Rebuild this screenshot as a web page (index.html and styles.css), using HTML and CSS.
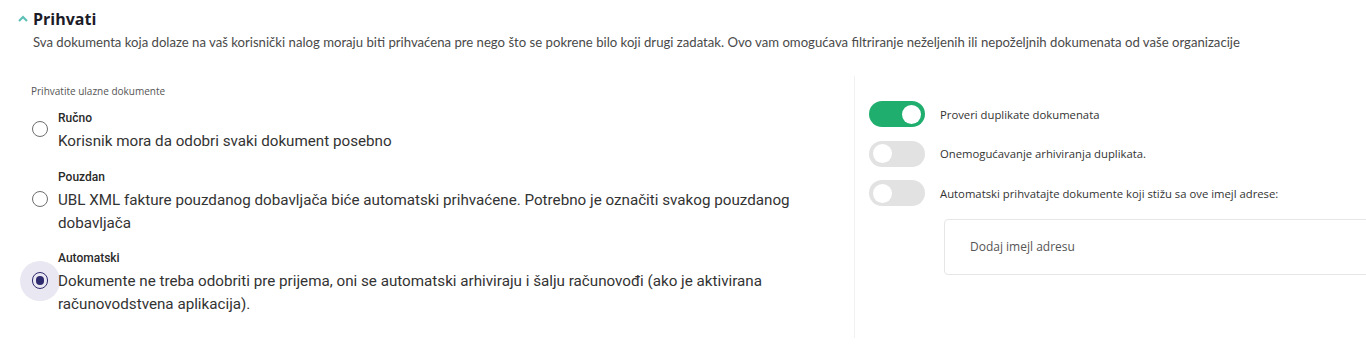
FILE: index.html
```html
<!DOCTYPE html>
<html lang="sr">
<head>
<meta charset="utf-8">
<link rel="stylesheet" href="styles.css">
</head>
<body>
<section class="panel">
  <header class="head">
    <svg class="chev" width="10" height="7" viewBox="0 0 10 7"><path d="M1 6 L5 2 L9 6" fill="none" stroke="#5fc0b6" stroke-width="2.2"/></svg>
    <h2 class="title">Prihvati</h2>
  </header>
  <p class="desc">Sva dokumenta koja dolaze na vaš korisnički nalog moraju biti prihvaćena pre nego što se pokrene bilo koji drugi zadatak. Ovo vam omogućava filtriranje neželjenih ili nepoželjnih dokumenata od vaše organizacije</p>
  <div class="cols">
    <div class="left">
      <div class="caption">Prihvatite ulazne dokumente</div>
      <div class="opt">
        <span class="radio"><span class="ring"></span></span>
        <div class="otext">
          <div class="olabel">Ručno</div>
          <div class="odesc">Korisnik mora da odobri svaki dokument posebno</div>
        </div>
      </div>
      <div class="opt">
        <span class="radio"><span class="ring"></span></span>
        <div class="otext">
          <div class="olabel">Pouzdan</div>
          <div class="odesc">UBL XML fakture pouzdanog dobavljača biće automatski prihvaćene. Potrebno je označiti svakog pouzdanog dobavljača</div>
        </div>
      </div>
      <div class="opt">
        <span class="radio checked"><span class="ring"><span class="dot"></span></span></span>
        <div class="otext">
          <div class="olabel">Automatski</div>
          <div class="odesc">Dokumente ne treba odobriti pre prijema, oni se automatski arhiviraju i šalju računovođi (ako je aktivirana računovodstvena aplikacija).</div>
        </div>
      </div>
    </div>
    <div class="right">
      <div class="trow"><span class="toggle on"><span class="knob"></span></span><span class="tlabel">Proveri duplikate dokumenata</span></div>
      <div class="trow"><span class="toggle"><span class="knob"></span></span><span class="tlabel">Onemogućavanje arhiviranja duplikata.</span></div>
      <div class="trow"><span class="toggle"><span class="knob"></span></span><span class="tlabel">Automatski prihvatajte dokumente koji stižu sa ove imejl adrese:</span></div>
      <div class="email">Dodaj imejl adresu</div>
    </div>
  </div>
</section>
</body>
</html>
```

FILE: styles.css
```css
html, body { margin: 0; padding: 0; background: #fff; }
body { width: 1366px; height: 348px; overflow: hidden; }
.panel { padding: 9px 0 0 18px; }
.head { display: flex; align-items: center; gap: 5px; height: 20px; }
.chev { margin-top: -2px; }
.title { margin: 0; font-family: "Open Sans", sans-serif; font-weight: 700; font-size: 16px; color: #1c1c28; line-height: 20px; }
.desc { margin: 3px 0 0 15px; font-family: Lato, sans-serif; font-size: 13.15px; color: #4a4a4a; line-height: 20px; white-space: nowrap; }
.cols { display: flex; margin-top: 24px; }
.left { flex: none; width: 823px; padding: 8px 0 0 13px; border-right: 1px solid #f0f0f0; height: 254px; }
.caption { font-family: "Open Sans", sans-serif; font-size: 10px; color: #555; line-height: 14px; margin-bottom: 10px; }
.opt { display: flex; align-items: center; margin-bottom: 13.5px; }
.radio { width: 40px; height: 40px; flex: none; margin-left: -11px; margin-top: -3px; display: flex; align-items: center; justify-content: center; border-radius: 50%; }
.radio.checked { background: #e9e7f1; }
.ring { width: 14.5px; height: 14.5px; border: 1.7px solid #6e6e6e; border-radius: 50%; display: flex; align-items: center; justify-content: center; }
.radio.checked .ring { border-color: #2e2a6e; }
.dot { width: 8.5px; height: 8.5px; border-radius: 50%; background: #2e2a6e; }
.otext { margin-left: -2px; }
.olabel { font-family: Roboto, sans-serif; font-weight: 500; font-size: 12px; color: #2a2a2a; line-height: 20px; margin-bottom: 2px; }
.odesc { font-family: Roboto, sans-serif; font-size: 15.2px; color: #333; line-height: 23px; max-width: 760px; }
.right { padding: 25px 0 0 14px; flex: 1; min-width: 0; }
.trow { display: flex; align-items: center; gap: 15px; height: 26px; margin-bottom: 13.5px; }
.toggle { width: 56px; height: 26px; border-radius: 13px; background: #e2e2e2; flex: none; display: flex; align-items: center; padding: 0 4px; box-sizing: border-box; }
.toggle.on { background: #20ae6e; justify-content: flex-end; }
.knob { width: 19px; height: 19px; border-radius: 50%; background: #fff; }
.tlabel { font-family: "Open Sans", sans-serif; font-size: 11.3px; color: #333; white-space: nowrap; }
.email { margin: -1px 0 0 75px; height: 56px; border: 1px solid #e6e6e6; border-radius: 4px; box-sizing: border-box; width: 440px; display: flex; align-items: center; padding-left: 25px; font-family: "Open Sans", sans-serif; font-size: 12px; color: #555; }
```
